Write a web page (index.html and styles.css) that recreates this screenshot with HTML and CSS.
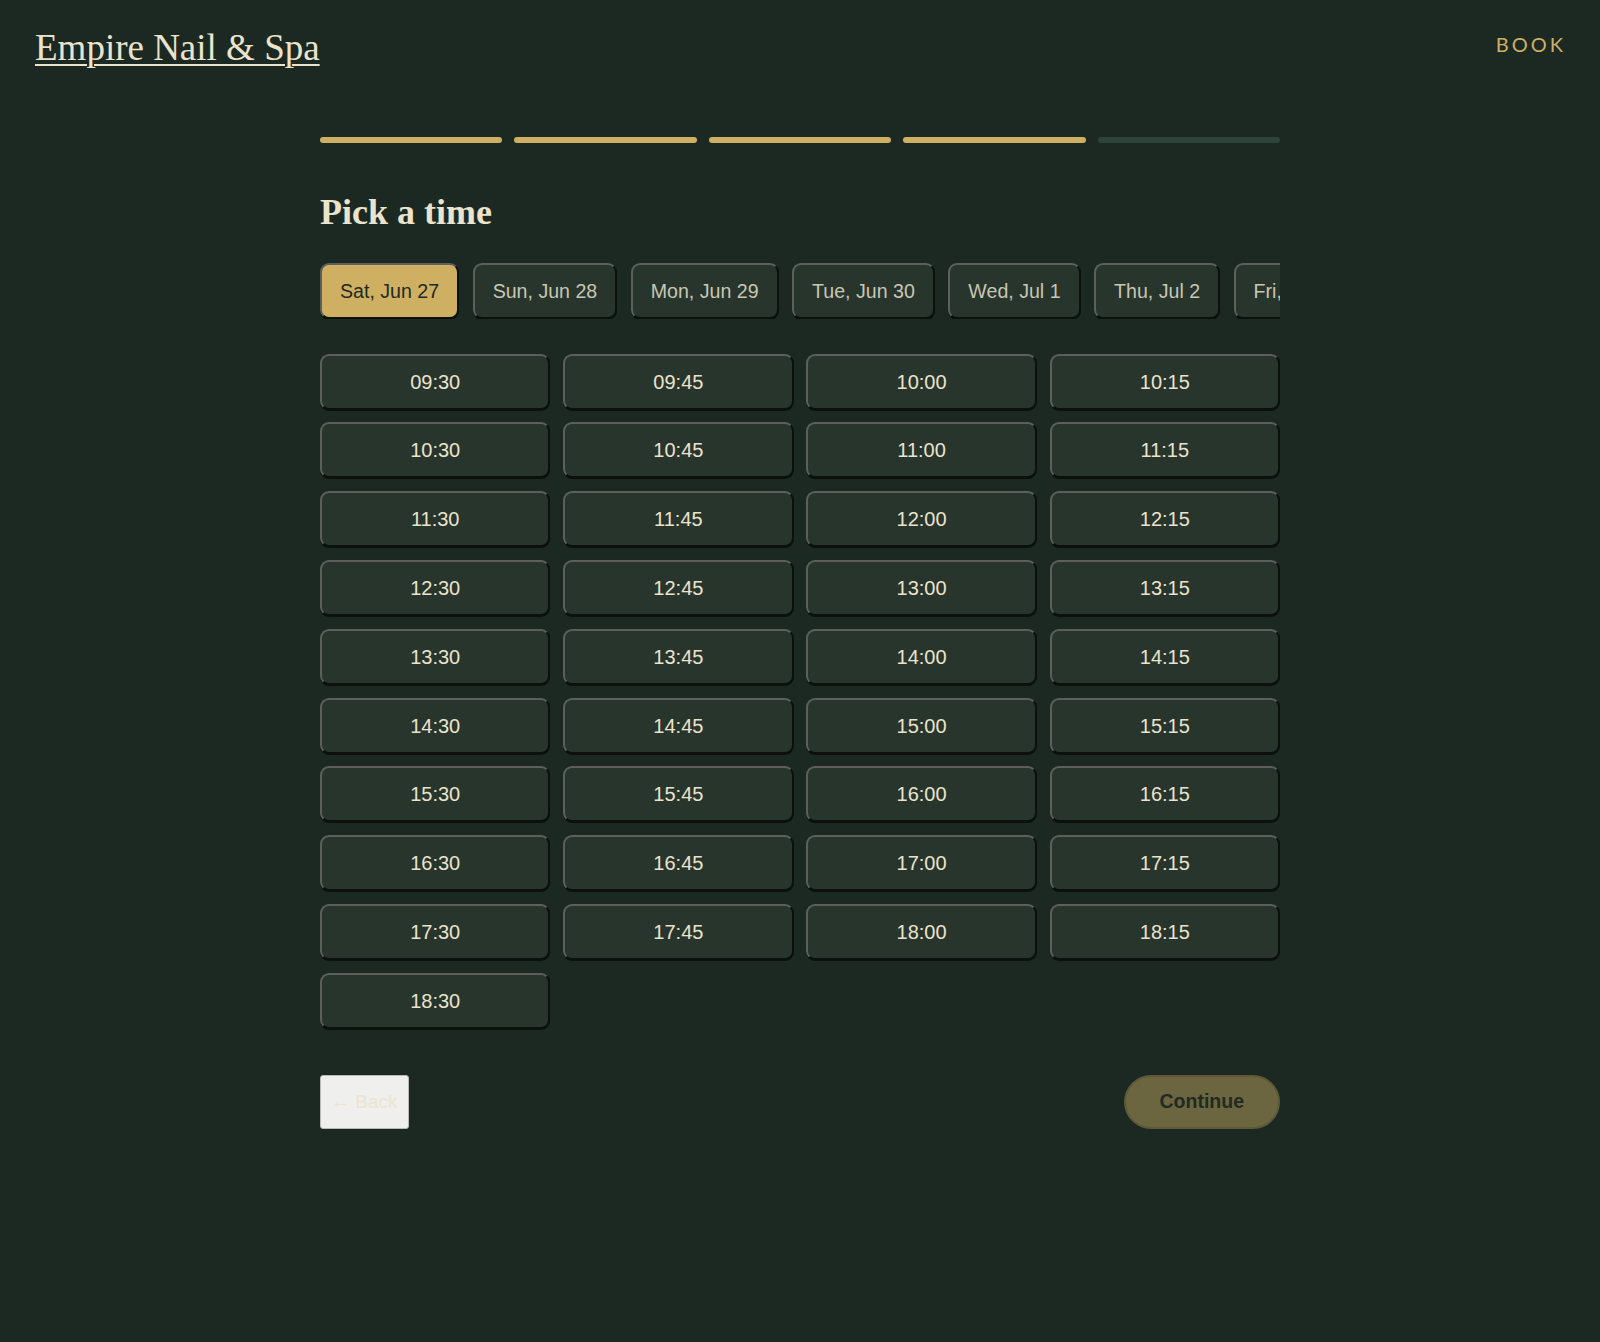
FILE: index.html
```html
<!DOCTYPE html>
<html lang="en">
<head>
    <meta charset="UTF-8">
    <meta name="viewport" content="width=device-width, initial-scale=1.0">
    <title>Empire Nail &amp; Spa - Book</title>
    <link rel="stylesheet" href="styles.css">
</head>
<body>
    <header class="site-header">
        <a href="#" class="logo">Empire Nail &amp; Spa</a>
        <a href="#" class="nav-book">BOOK</a>
    </header>

    <main class="booking">
        <div class="progress">
            <span class="progress-step done"></span>
            <span class="progress-step done"></span>
            <span class="progress-step done"></span>
            <span class="progress-step done"></span>
            <span class="progress-step"></span>
        </div>

        <h1 class="step-title">Pick a time</h1>

        <div class="date-tabs">
            <button class="date-tab active">Sat, Jun 27</button>
            <button class="date-tab">Sun, Jun 28</button>
            <button class="date-tab">Mon, Jun 29</button>
            <button class="date-tab">Tue, Jun 30</button>
            <button class="date-tab">Wed, Jul 1</button>
            <button class="date-tab">Thu, Jul 2</button>
            <button class="date-tab">Fri, Jul 3</button>
            <button class="date-tab">Sat, Jul 4</button>
        </div>

        <div class="slots">
            <button class="slot">09:30</button>
            <button class="slot">09:45</button>
            <button class="slot">10:00</button>
            <button class="slot">10:15</button>
            <button class="slot">10:30</button>
            <button class="slot">10:45</button>
            <button class="slot">11:00</button>
            <button class="slot">11:15</button>
            <button class="slot">11:30</button>
            <button class="slot">11:45</button>
            <button class="slot">12:00</button>
            <button class="slot">12:15</button>
            <button class="slot">12:30</button>
            <button class="slot">12:45</button>
            <button class="slot">13:00</button>
            <button class="slot">13:15</button>
            <button class="slot">13:30</button>
            <button class="slot">13:45</button>
            <button class="slot">14:00</button>
            <button class="slot">14:15</button>
            <button class="slot">14:30</button>
            <button class="slot">14:45</button>
            <button class="slot">15:00</button>
            <button class="slot">15:15</button>
            <button class="slot">15:30</button>
            <button class="slot">15:45</button>
            <button class="slot">16:00</button>
            <button class="slot">16:15</button>
            <button class="slot">16:30</button>
            <button class="slot">16:45</button>
            <button class="slot">17:00</button>
            <button class="slot">17:15</button>
            <button class="slot">17:30</button>
            <button class="slot">17:45</button>
            <button class="slot">18:00</button>
            <button class="slot">18:15</button>
            <button class="slot">18:30</button>
        </div>

        <div class="actions">
            <button class="btn-back">&larr; Back</button>
            <button class="btn-continue" disabled>Continue</button>
        </div>
    </main>
</body>
</html>
```

FILE: styles.css
```css
:root {
    --bg: #1b2922;
    --card: #27352d;
    --cream: #ebe3cc;
    --muted: #c9c6b3;
    --gold: #cfb063;
    --edge-light: #5d605a;
    --edge-dark: #0c110e;
}

body {
    margin: 0;
    background-color: var(--bg);
    color: var(--cream);
    font-family: "Liberation Sans", Arial, sans-serif;
    min-height: 100vh;
}

.site-header {
    display: flex;
    justify-content: space-between;
    align-items: flex-start;
    padding: 26px 34px 0 35px;
}

.logo {
    font-family: "Liberation Serif", "Times New Roman", serif;
    font-size: 37px;
    line-height: 1.2;
    color: var(--cream);
    text-decoration: underline;
    text-decoration-thickness: 2px;
    text-underline-offset: 4px;
}

.nav-book {
    margin-top: 6px;
    font-family: Lato, sans-serif;
    font-size: 20px;
    letter-spacing: 3px;
    color: var(--gold);
    text-decoration: none;
}

.booking {
    width: 960px;
    margin: 0 auto;
    padding-top: 67px;
}

.progress {
    display: flex;
    gap: 12px;
}

.progress-step {
    flex: 1;
    height: 6px;
    border-radius: 3px;
    background-color: #2f4438;
}

.progress-step.done {
    background-color: var(--gold);
}

.step-title {
    margin: 48px 0 0;
    font-family: "Liberation Serif", "Times New Roman", serif;
    font-size: 36px;
    line-height: 1.2;
    font-weight: bold;
    color: var(--cream);
}

.date-tabs {
    display: flex;
    gap: 13.5px;
    margin-top: 28px;
    overflow-x: auto;
    scrollbar-width: none;
}

.date-tab, .slot {
    font-family: "Liberation Sans", Arial, sans-serif;
    background-color: var(--card);
    border: 2px solid;
    border-color: var(--edge-light) var(--edge-dark) var(--edge-dark) var(--edge-light);
    border-radius: 9px;
    box-shadow: 0 1px 0 var(--edge-dark);
    cursor: pointer;
}

.date-tab {
    flex-shrink: 0;
    padding: 15px 18px;
    font-size: 19.6px;
    line-height: 22px;
    color: var(--muted);
    white-space: nowrap;
}

.date-tab.active {
    background-color: var(--gold);
    color: #1f2a22;
}

.slots {
    display: grid;
    grid-template-columns: repeat(4, 1fr);
    gap: 12.8px;
    margin-top: 35px;
}

.slot {
    padding: 15px 0;
    font-size: 20px;
    line-height: 22px;
    color: var(--cream);
}

.actions {
    display: flex;
    justify-content: space-between;
    align-items: center;
    margin-top: 46px;
}

.btn-back {
    height: 54px;
    padding: 0 10px;
    font-family: "Liberation Sans", Arial, sans-serif;
    font-size: 19px;
    color: #ebe4cf;
    background-color: #efefed;
    border: 1px solid #b9b9b5;
    border-radius: 3px;
}

.btn-continue {
    height: 54px;
    padding: 0 34px;
    font-family: "Liberation Sans", Arial, sans-serif;
    font-size: 19.5px;
    font-weight: bold;
    color: #1e2b23;
    background-color: #6b6540;
    border: 2px solid #5d5939;
    border-radius: 27px;
}
```
